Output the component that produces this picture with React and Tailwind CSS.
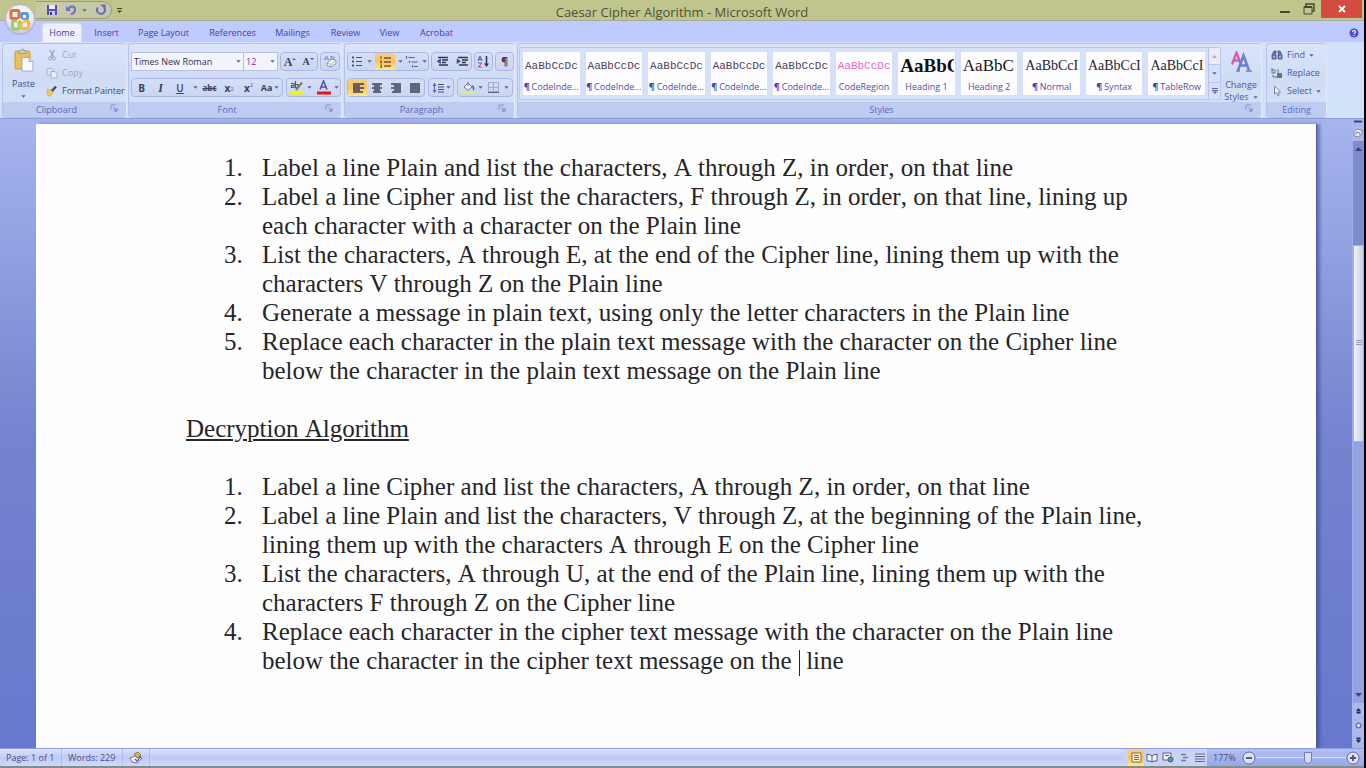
import React from "react";

const UI = "font-['Open_Sans','Noto_Sans',sans-serif]";

function Arrow({ className = "" }) {
  return (
    <svg width="5" height="3" viewBox="0 0 5 3" className={"shrink-0 " + className} aria-hidden="true">
      <path d="M0.3 0.2h4.400L2.500 2.800z" fill="#5a62ae" />
    </svg>
  );
}

function Launcher({ label }) {
  return (
    <button aria-label={label} className="absolute right-1 top-0 h-3 w-3">
      <svg width="9" height="9" viewBox="0 0 9 9" fill="none">
        <path d="M1 6V1h5" stroke="#8a94cc" />
        <path d="M3.500 3.500l3 3M7 4v3H4" stroke="#6f7ac0" />
      </svg>
    </button>
  );
}

function Group({ name, launcher, className = "", children }) {
  return (
    <section
      aria-label={name}
      className={"flex h-[75px] flex-col overflow-hidden rounded-sm border border-[#b6c2ea] border-r-[#e6e9fb] bg-linear-to-b from-[#dbe4fa] via-[#cfdcf4] to-[#d6e4f6] " + className}
    >
      <div className="min-h-0 flex-1">{children}</div>
      <div className={"relative h-[15px] shrink-0 bg-[#bfccf2] text-center text-[9px] leading-[15px] text-[#5868bd] " + (launcher ? "pr-4" : "")}>
        {name}
        {launcher && <Launcher label={name + " settings"} />}
      </div>
    </section>
  );
}

function Cluster({ className = "", children }) {
  return (
    <div className={"flex h-[19px] items-center rounded-sm border border-[#adb5e4] bg-linear-to-b from-[#d5def7] to-[#cad6f1] " + className}>
      {children}
    </div>
  );
}

function Btn({ label, active, className = "w-5", children }) {
  return (
    <button
      aria-label={label}
      className={
        "flex h-full shrink-0 items-center justify-center text-[#3d3f5c] " +
        (active ? "bg-linear-to-b from-[#f3cf90] via-[#fbc05a] to-[#fde88f] " : "") +
        className
      }
    >
      {children}
    </button>
  );
}

function Svg({ w = 14, h = 14, children }) {
  return (
    <svg width={w} height={h} viewBox={`0 0 ${w} ${h}`} fill="none" aria-hidden="true" className="shrink-0">
      {children}
    </svg>
  );
}

function AlignIcon({ d }) {
  return (
    <Svg w={12} h={10}>
      <path d={d} stroke="#3c3e58" strokeWidth="1.400" />
    </Svg>
  );
}

function OfficeOrb() {
  return (
    <button aria-label="Office Button" className="absolute left-1 top-1 z-10 h-8 w-8">
      <svg width="32" height="32" viewBox="0 0 32 32" fill="none">
        <defs>
          <radialGradient id="orb" cx="50%" cy="35%" r="65%">
            <stop offset="0" stopColor="#ffffff" />
            <stop offset="0.65" stopColor="#e9eaf6" />
            <stop offset="1" stopColor="#b5b9d8" />
          </radialGradient>
        </defs>
        <circle cx="16" cy="15.500" r="15" fill="url(#orb)" stroke="#a5a7b0" strokeWidth="0.800" />
        <rect x="7" y="6.500" width="8" height="8" rx="1.500" stroke="#e5703f" strokeWidth="3" />
        <rect x="17.500" y="9.500" width="6" height="6" rx="1" stroke="#5b97dd" strokeWidth="2.800" />
        <rect x="8.500" y="17" width="6.500" height="8" rx="1" stroke="#9ccb62" strokeWidth="2.800" />
        <rect x="17" y="17" width="7.600" height="7.400" rx="1.500" stroke="#f2bd42" strokeWidth="3" />
        <path d="M13 17.500l3-3 3 3" stroke="#fff" strokeWidth="1.200" />
      </svg>
    </button>
  );
}

function TitleBar() {
  return (
    <header className="relative flex h-[21px] shrink-0 items-start border-b border-[#a9ae92] bg-[#bfc58c]">
      <div className="ml-9 mt-px flex h-[18px] w-[76px] items-center rounded-r-full border border-l-0 border-[#989d79] bg-[#c5c9a4] pl-2.5">
        <button aria-label="Save" className="w-5">
          <Svg w={12} h={12}>
            <path d="M1 1h10v10H1z" fill="#5450b4" />
            <path d="M3 1h6v4H3z" fill="#e9eafa" />
            <path d="M3 7h6v4H3z" fill="#c8cbef" />
            <path d="M4 8h2v3H4z" fill="#3a3790" />
          </Svg>
        </button>
        <button aria-label="Undo" className="w-3">
          <Svg w={11} h={12}>
            <path d="M0 2v5h5z" fill="#6b70c9" />
            <path d="M2.500 5C4 1.500 9 1.500 9 5.500S6.500 9.500 5 10.500" stroke="#6b70c9" strokeWidth="2" />
          </Svg>
        </button>
        <Arrow className="ml-1" />
        <button aria-label="Repeat" className="ml-2">
          <Svg w={12} h={12}>
            <path d="M2.800 3.500C0.500 6.500 3 10 6 10s5-3 3.200-6.500" stroke="#6368c6" strokeWidth="2" />
            <path d="M5 0.500h5.500v5z" fill="#6368c6" />
          </Svg>
        </button>
      </div>
      <button aria-label="Customize toolbar" className="ml-1 mt-2">
        <Svg w={7} h={6}>
          <path d="M1 0.500h5" stroke="#44472f" />
          <path d="M1 2.500h5L3.500 5z" fill="#44472f" />
        </Svg>
      </button>
      <h1 className="absolute inset-x-0 top-0 text-center text-[13px] leading-6 text-[#4f5138]">
        Caesar Cipher Algorithm - Microsoft Word
      </h1>
      <div className="relative ml-auto flex h-[18px] items-start">
        <button aria-label="Minimize" className="flex h-[18px] w-6 items-center justify-center">
          <Svg w={10} h={10}><path d="M0 8h10" stroke="#47492f" strokeWidth="2" /></Svg>
        </button>
        <button aria-label="Restore" className="flex h-[18px] w-6 items-center justify-center">
          <Svg w={12} h={12}>
            <path d="M3 3V1h8v7H9" stroke="#47492f" strokeWidth="1.500" />
            <path d="M1 3.500h8V11H1z" stroke="#47492f" />
            <path d="M1 4h8" stroke="#47492f" strokeWidth="2" />
          </Svg>
        </button>
        <button aria-label="Close" className="flex h-[18px] w-[41px] items-center justify-center bg-[#d44b3f]">
          <Svg w={8} h={8}><path d="M1 1l6 6M7 1L1 7" stroke="#fff" strokeWidth="1.800" /></Svg>
        </button>
        <span className="w-0.5" />
      </div>
    </header>
  );
}

const tabs = [
  ["Insert", "w-[49px]"],
  ["Page Layout", "w-[65px]"],
  ["References", "w-[73px]"],
  ["Mailings", "w-[47px]"],
  ["Review", "w-[59px]"],
  ["View", "w-[29px]"],
  ["Acrobat", "w-[65px]"],
];

function TabRow() {
  return (
    <nav className="flex h-[21px] shrink-0 items-end bg-[#bfcaff] pl-[42px] pr-[5px] text-[9px] text-[#4045a4]">
      <button className="h-[19px] w-10 rounded-t-sm border border-b-0 border-[#d9dcfa] bg-[#eef0fd] leading-[18px]">Home</button>
      {tabs.map(([t, w]) => (
        <button key={t} className={"h-[19px] whitespace-nowrap leading-[18px] " + w}>{t}</button>
      ))}
      <button aria-label="Help" className="mb-1 ml-auto">
        <Svg w={10} h={10}>
          <circle cx="5" cy="5" r="4.500" fill="#4d4fd0" />
          <path d="M3.500 4c0-2 3-2 3 0 0 1-1.500 1-1.500 2M5 7v1" stroke="#fff" strokeWidth="1.100" />
        </Svg>
      </button>
    </nav>
  );
}

function Clipboard() {
  return (
    <Group name="Clipboard" launcher className="w-[125px]">
      <div className="flex h-full">
        <button className="flex w-[41px] flex-col items-center pt-1 text-[9px] leading-[14px] text-[#3e4795]">
          <Svg w={22} h={25}>
            <rect x="2" y="3" width="15" height="18" rx="1.500" fill="#e9bf58" stroke="#c79b3e" />
            <path d="M6 2.500h2a1.500 1.500 0 0 1 3 0h2v3H6z" fill="#c4c8d6" stroke="#8a8e9e" strokeWidth="0.700" />
            <path d="M9 9.500h7l4 4V23H9z" fill="#f8f9ff" stroke="#969cc0" strokeWidth="0.800" />
            <path d="M16 9.500v4h4" fill="#d4d9ed" stroke="#969cc0" strokeWidth="0.800" />
          </Svg>
          <span className="mt-1">Paste</span>
          <Arrow className="mt-1" />
        </button>
        <div className="flex flex-col pt-0.5 text-[9px] leading-[18px] text-[#3e4795]">
          <button className="flex h-[18px] items-center gap-1 pl-0.5 text-[#a6a4c3]">
            <Svg w={12} h={12}>
              <path d="M4 1l3.500 7M8.500 1L5 8" stroke="#9a9cc0" strokeWidth="1.300" />
              <circle cx="4" cy="9.500" r="1.500" stroke="#9a9cc0" />
              <circle cx="8" cy="9.500" r="1.500" stroke="#9a9cc0" />
            </Svg>
            Cut
          </button>
          <button className="flex h-[18px] items-center gap-1 pl-0.5 text-[#a6a4c3]">
            <Svg w={12} h={12}>
              <path d="M1 1.500h5l1 1V8H1z" fill="#dde3f4" stroke="#b0b5d2" />
              <path d="M5 4.500h4l2 2V11H5z" fill="#eaeefa" stroke="#a6abcc" />
            </Svg>
            Copy
          </button>
          <button className="flex h-[18px] items-center gap-1 whitespace-nowrap pl-0.5">
            <Svg w={12} h={12}>
              <path d="M1 5l5-1 1 3-3 4H2z" fill="#f0cd4e" stroke="#b99a35" strokeWidth="0.500" />
              <path d="M6 6l4-4.500" stroke="#45464f" strokeWidth="2.200" />
            </Svg>
            Format Painter
          </button>
        </div>
      </div>
    </Group>
  );
}

function FontGroup() {
  return (
    <Group name="Font" launcher className="ml-px w-[214px]">
      <div className="flex flex-col gap-[7px] pl-0.5 pt-2">
        <div className="flex">
          <label className="relative flex h-[19px] w-[113px] items-center border border-[#b7bfe6] bg-[#f3f4fd]">
            <select aria-label="Font name" className="w-full appearance-none bg-transparent pl-0.5 text-[9px] leading-4 text-[#31324b] outline-none">
              <option>Times New Roman</option>
            </select>
            <Arrow className="absolute right-0.5" />
          </label>
          <label className="relative flex h-[19px] w-[34px] items-center border border-l-0 border-[#b7bfe6] bg-[#f3f4fd]">
            <select aria-label="Font size" className="w-full appearance-none bg-transparent pl-0.5 text-[9px] leading-4 text-[#8b2fb0] outline-none">
              <option>12</option>
            </select>
            <Arrow className="absolute right-0.5" />
          </label>
          <Cluster className="ml-0.5 w-[38px]">
            <Btn label="Grow font" className="w-[18px]">
              <span className="font-['Liberation_Serif',serif] text-[12px] font-bold leading-4">A</span>
              <Svg w={4} h={10}><path d="M0 3l2-2 2 2z" fill="#5059b5" /></Svg>
            </Btn>
            <Btn label="Shrink font" className="w-[18px]">
              <span className="font-['Liberation_Serif',serif] text-[10px] font-bold leading-4">A</span>
              <Svg w={4} h={10}><path d="M0 1l2 2 2-2z" fill="#5059b5" /></Svg>
            </Btn>
          </Cluster>
          <Cluster className="ml-0.5 w-5">
            <Btn label="Clear formatting" className="w-[18px]">
              <Svg w={14} h={13}>
                <path d="M1 5l2.500-4L6 5M2 4h3M8 1v4h3V2H8" stroke="#8287b5" />
                <path d="M4 8l5-4 4 1.500v3L8 12 4 10.500z" fill="#f6f6fc" stroke="#82859f" strokeWidth="0.900" />
                <path d="M4 8l4 1.500 5-4M8 9.500V12" stroke="#9a9cb5" strokeWidth="0.700" />
              </Svg>
            </Btn>
          </Cluster>
        </div>
        <div className="flex gap-[3px] text-[10px] leading-4">
          <Cluster className="w-[152px]">
            <Btn label="Bold" className="w-[19px]"><b>B</b></Btn>
            <Btn label="Italic" className="w-[19px]"><i className="font-['Liberation_Serif',serif] text-[12px] font-bold">I</i></Btn>
            <Btn label="Underline" className="w-5"><span className="font-semibold underline">U</span></Btn>
            <Btn label="Underline style" className="w-2.5"><Arrow /></Btn>
            <Btn label="Strikethrough" className="w-[19px] text-[8px]"><b className="line-through">abc</b></Btn>
            <Btn label="Subscript" className="w-5"><b>x</b><sub className="text-[6px] text-[#5059b5]">2</sub></Btn>
            <Btn label="Superscript" className="w-[19px]"><b>x</b><sup className="text-[6px] text-[#5059b5]">2</sup></Btn>
            <Btn label="Change case" className="w-6 gap-0.5 text-[9px]"><b>Aa</b><Arrow /></Btn>
          </Cluster>
          <Cluster className="w-[55px]">
            <Btn label="Highlight" className="w-[27px] gap-[3px]">
              <Svg w={15} h={15}>
                <path d="M1 11.500h14v3H1z" fill="#f8f300" />
                <path d="M2 3.500h3v4H2.500V5.500H5M6.500 1v6.500H9v-3H6.500" stroke="#4f5268" strokeWidth="1.100" />
                <path d="M7 10l6-7.500" stroke="#7e8448" strokeWidth="2.200" />
              </Svg>
              <Arrow />
            </Btn>
            <Btn label="Font color" className="w-[26px] gap-[3px]">
              <Svg w={15} h={15}>
                <path d="M4 9.500L7.500 1l3.500 8.500M5 7h5" stroke="#4b52a6" strokeWidth="1.500" />
                <path d="M1 11.500h14v3H1z" fill="#f01020" />
              </Svg>
              <Arrow />
            </Btn>
          </Cluster>
        </div>
      </div>
    </Group>
  );
}

function IndentIcon({ arrow }) {
  return (
    <Svg w={12} h={11}>
      <path d="M2 1.500h10M6 4h6M6 6.500h4M3 9h9" stroke="#34364f" strokeWidth="1.500" />
      <path d={arrow} fill="#3c4690" stroke="#3c4690" strokeWidth="0.600" />
    </Svg>
  );
}

function Paragraph() {
  return (
    <Group name="Paragraph" launcher className="ml-0.5 w-[171px]">
      <div className="flex flex-col gap-[7px] pl-0.5 pt-2">
        <div className="flex gap-0.5">
          <Cluster className="w-[82px]">
            <Btn label="Bullets" className="w-[27px] gap-1">
              <Svg w={12} h={11}>
                <path d="M1 1.500h2M1 5.500h2M1 9.500h2" stroke="#4a4fa0" strokeWidth="1.800" />
                <path d="M5 1.500h6M5 5.500h6M5 9.500h6" stroke="#4d4f6c" />
              </Svg>
              <Arrow />
            </Btn>
            <Btn label="Numbering" active className="w-5">
              <Svg w={12} h={12}>
                <path d="M2 0v3M1 5h1.500v2H1M1 9h1.500v2.500H1" stroke="#735a24" />
                <path d="M5 2h7M5 6h7M5 10h7" stroke="#725a34" strokeWidth="1.300" />
              </Svg>
            </Btn>
            <Btn label="Numbering style" className="w-2.5"><Arrow /></Btn>
            <Btn label="Multilevel list" className="w-[22px] gap-1">
              <Svg w={13} h={12}>
                <path d="M1.500 0v3M4.500 4.500v2.500M7.500 9v2.500" stroke="#6166a8" strokeWidth="1.200" />
                <path d="M3.500 1.500h6M6.500 6h6M9 10.500h4" stroke="#5f627f" strokeWidth="1.200" />
              </Svg>
              <Arrow />
            </Btn>
          </Cluster>
          <Cluster className="w-[41px]">
            <Btn label="Decrease indent"><IndentIcon arrow="M4.500 3L1 5.300l3.500 2.200z" /></Btn>
            <Btn label="Increase indent"><IndentIcon arrow="M1 3l3.500 2.300L1 7.500z" /></Btn>
          </Cluster>
          <Cluster className="w-[19px]">
            <Btn label="Sort" className="w-[17px]">
              <Svg w={13} h={13}>
                <path d="M1 6l2-5 2 5M1.500 4.500h3" stroke="#494fbe" />
                <path d="M1 8h4l-4 4h4" stroke="#b24878" />
                <path d="M9.500 1v8" stroke="#34364f" strokeWidth="1.500" />
                <path d="M7 8.500h5L9.500 12z" fill="#34364f" />
              </Svg>
            </Btn>
          </Cluster>
          <Cluster className="w-[19px]">
            <Btn label="Show paragraph marks" className="w-[17px] text-[11px] font-bold">¶</Btn>
          </Cluster>
        </div>
        <div className="flex gap-[3px]">
          <Cluster className="w-[78px]">
            <Btn label="Align left" active className="w-[19px]"><AlignIcon d="M1 1h11M1 3h7M1 5h11M1 7h7M1 9h10" /></Btn>
            <Btn label="Center" className="w-[19px]"><AlignIcon d="M1 1h10M3 3h6M1 5h10M3 7h6M2 9h8" /></Btn>
            <Btn label="Align right" className="w-[19px]"><AlignIcon d="M1 1h10M4 3h7M1 5h10M4 7h7M2 9h9" /></Btn>
            <Btn label="Justify" className="w-[19px]"><AlignIcon d="M1 1h10M1 3h10M1 5h10M1 7h10M1 9h10" /></Btn>
          </Cluster>
          <Cluster className="w-[26px]">
            <Btn label="Line spacing" className="w-6 gap-0.5">
              <Svg w={12} h={12}>
                <path d="M2.500 1v10" stroke="#5863c8" />
                <path d="M0.500 4l2-3 2 3zM0.500 8l2 3 2-3z" fill="#5863c8" />
                <path d="M6 2.500h6M6 5h6M6 7.500h6M6 10h6" stroke="#4d4f6c" />
              </Svg>
              <Arrow />
            </Btn>
          </Cluster>
          <Cluster className="w-[56px]">
            <Btn label="Shading" className="w-[27px] gap-[3px]">
              <Svg w={14} h={13}>
                <path d="M1 10.500h12v2H1z" fill="#e8ee5c" />
                <path d="M3 6l4-4 4 4-4 3.500z" fill="#eef0fb" stroke="#73779e" />
                <path d="M7 5V1" stroke="#73779e" />
                <path d="M11 5c2 1 2 3 1 4" stroke="#4e5cc0" strokeWidth="1.600" />
              </Svg>
              <Arrow />
            </Btn>
            <Btn label="Borders" className="w-[27px] gap-[5px]">
              <Svg w={11} h={11}>
                <path d="M0.500 0.500h10v9H0.500zM5.500 1v9M1 5.500h9" stroke="#a3a8cd" />
                <path d="M0 10.500h11" stroke="#5d6080" />
              </Svg>
              <Arrow />
            </Btn>
          </Cluster>
        </div>
      </div>
    </Group>
  );
}

const mono = "font-['Liberation_Mono',monospace] text-[11px] ";
const serif = "font-['Liberation_Serif',serif] ";
const styles = [
  ["¶", "CodeInde...", mono + "text-[#4d3d5c]"],
  ["¶", "CodeInde...", mono + "text-[#4d3d5c]"],
  ["¶", "CodeInde...", mono + "text-[#4d3d5c]"],
  ["¶", "CodeInde...", mono + "text-[#4d3d5c]"],
  ["¶", "CodeInde...", mono + "text-[#4d3d5c]"],
  ["", "CodeRegion", mono + "text-[#f062c8]"],
  ["", "Heading 1", serif + "text-[19px] font-bold text-[#111]", "AaBbC"],
  ["", "Heading 2", serif + "text-[17px] text-[#161616]", "AaBbC"],
  ["¶", "Normal", serif + "text-[14px] text-[#28242c]", "AaBbCcI"],
  ["¶", "Syntax", serif + "text-[14px] text-[#28242c]", "AaBbCcI"],
  ["¶", "TableRow", serif + "text-[14px] text-[#28242c]", "AaBbCcI"],
];

function Styles() {
  return (
    <Group name="Styles" launcher className="ml-0.5 min-w-0 flex-1">
      <div className="flex pl-px pt-[3px]">
        <div className="flex h-[53px] min-w-0 flex-1 border border-[#bac7ef] bg-[#d6e0f8]">
          <div className="grid min-w-0 flex-1 grid-cols-11">
            {styles.map(([mark, name, cls, sample = "AaBbCcDc"], i) => (
              <button key={i} className="mx-[3px] mt-1 flex h-[43px] min-w-0 flex-col overflow-hidden bg-[#fdfdff] px-px">
                <span className={"h-[27px] w-full overflow-hidden pl-px text-left leading-[28px] " + cls}>{sample}</span>
                <span className="flex w-full justify-center gap-0.5 whitespace-nowrap text-[9px] leading-4 text-[#5a4aa4]">
                  {mark && <b className="text-[#3d44c4]">{mark}</b>}
                  {name}
                </span>
              </button>
            ))}
          </div>
          <div className="flex w-3 flex-col divide-y divide-[#b8c2ea] border-l border-[#b8c2ea]">
            <button aria-label="Scroll up" className="flex flex-1 items-center justify-center bg-[#e9ebf6]"><Svg w={5} h={3}><path d="M0 3h5L2.500 0z" fill="#a9aec6" /></Svg></button>
            <button aria-label="Scroll down" className="flex flex-1 items-center justify-center"><Arrow /></button>
            <button aria-label="More styles" className="flex flex-1 items-center justify-center"><Svg w={6} h={6}><path d="M0 0.500h6M0 2.500h6" stroke="#5a62ae" /><path d="M0.500 3.500h5L3 6z" fill="#5a62ae" /></Svg></button>
          </div>
        </div>
        <button className="flex w-[40px] flex-col items-center pt-1 text-[9px] leading-3 text-[#4d56a8]">
          <Svg w={22} h={22}>
            <path d="M2 13.500L6.500 1.500l4.500 12M4 9.500h5" stroke="#d957ae" strokeWidth="2.300" />
            <path d="M8 19.500L13.500 4.500l5.500 15M10 14.500h7" stroke="#6a7fd4" strokeWidth="2.500" />
            <path d="M6 20h4M16 20h6" stroke="#6a7fd4" strokeWidth="1.500" />
          </Svg>
          <span className="mt-1.5">Change</span>
          <span className="flex items-center gap-1">Styles <Arrow /></span>
        </button>
      </div>
    </Group>
  );
}

function Editing() {
  const row = "flex h-[18px] items-center gap-1";
  return (
    <Group name="Editing" className="ml-1 w-[61px]">
      <div className="flex flex-col pl-1 pt-0.5 text-[9px] leading-[18px] text-[#4d56a8]">
        <button className={row}>
          <Svg w={12} h={12}>
            <path d="M1 10V6l2-4h2v8zM7 10V2h2l2 4v4z" fill="#6e76a6" stroke="#434b85" strokeWidth="0.800" />
            <path d="M5 5h2M2 8h2M8 8h2" stroke="#e5eafa" />
          </Svg>
          Find <Arrow />
        </button>
        <button className={row}>
          <Svg w={12} h={12}>
            <path d="M1 1v5h3V3H1M7 6V2M2 8v2h4" stroke="#646c8c" />
            <path d="M6 6h5v5H6z" fill="#58816b" />
          </Svg>
          Replace
        </button>
        <button className={row}>
          <Svg w={12} h={12}>
            <path d="M3.500 1v8l2-1.500L7 11l1.500-1L7 7h2.500z" fill="#fafaff" stroke="#74799c" strokeWidth="0.900" />
          </Svg>
          Select <Arrow />
        </button>
      </div>
    </Group>
  );
}

function ScrollBar() {
  return (
    <div className="flex w-3 shrink-0 flex-col bg-[#a9b9f0]">
      <button aria-label="Split" className="flex h-[5px] items-center justify-center"><Svg w={8} h={3}><path d="M0 1.500h8" stroke="#3b4377" strokeWidth="2" /></Svg></button>
      <button aria-label="View ruler" className="flex h-[17px] items-center justify-center">
        <Svg w={10} h={10}>
          <path d="M1 3l3-2 5 1v5l-3 2-5-1z" fill="#e8e6f4" stroke="#77779c" strokeWidth="0.800" />
          <path d="M3 7V4l4 1v3" stroke="#8a89aa" />
        </Svg>
      </button>
      <div className="flex min-h-0 flex-1 flex-col border-l border-[#a0afe8] bg-[#7d8ccb]">
        <button aria-label="Scroll up" className="flex h-4 shrink-0 items-center justify-center"><Svg w={7} h={4}><path d="M0 4h7L3.500 0z" fill="#3c4184" /></Svg></button>
        <div className="grow-[89]" />
        <div className="flex grow-[192] items-center justify-center border border-[#a8acd6] bg-linear-to-r from-[#f4f4fd] to-[#c8ccec]">
          <Svg w={6} h={6}><path d="M0 0.500h6M0 2.500h6M0 4.500h6" stroke="#999cba" /></Svg>
        </div>
        <div className="grow-[249] bg-[#93a3e0]" />
        <button aria-label="Scroll down" className="flex h-4 shrink-0 items-center justify-center bg-[#93a3e0]"><Svg w={7} h={4}><path d="M0 0h7L3.500 4z" fill="#4c3a8c" /></Svg></button>
      </div>
      <div className="flex h-[45px] shrink-0 flex-col items-center justify-around py-px">
        <button aria-label="Previous page"><Svg w={5} h={6}><path d="M0 3l2.500-3L5 3zM0.500 3.500h4v2h-4z" fill="#28294f" /></Svg></button>
        <button aria-label="Browse object"><Svg w={7} h={7}><circle cx="3.500" cy="3.500" r="2.500" fill="#d7d3ee" stroke="#55427e" /></Svg></button>
        <button aria-label="Next page"><Svg w={5} h={6}><path d="M0 3l2.500 3L5 3zM0.500 0.500h4v2h-4z" fill="#28294f" /></Svg></button>
      </div>
    </div>
  );
}

function Item({ n, children }) {
  return (
    <li className="flex">
      <span className="w-[38px] shrink-0">{n}.</span>
      <span>{children}</span>
    </li>
  );
}

function Document() {
  return (
    <main className="flex min-h-0 flex-1 bg-linear-to-b from-[#a6b5ee] via-[#7484cf] via-50% to-[#6878cc]">
      <div className="flex min-w-0 flex-1 overflow-hidden pl-9 pr-[35px] pt-[5px]">
        <article className="flex-1 border-r border-[#4e5c9a] bg-[#fefeff] pl-[150px] pt-[29px] font-['Liberation_Serif','Times_New_Roman',serif] text-[25px] leading-[29px] text-[#25252a] shadow-[3px_0_3px_rgba(50,60,130,0.5)] [font-kerning:none]">
          <ol className="pl-[38px]">
            <Item n={1}>Label a line Plain and list the characters, A through Z, in order, on that line</Item>
            <Item n={2}>Label a line Cipher and list the characters, F through Z, in order, on that line, lining up<br />each character with a character on the Plain line</Item>
            <Item n={3}>List the characters, A through E, at the end of the Cipher line, lining them up with the<br />characters V through Z on the Plain line</Item>
            <Item n={4}>Generate a message in plain text, using only the letter characters in the Plain line</Item>
            <Item n={5}>Replace each character in the plain text message with the character on the Cipher line<br />below the character in the plain text message on the Plain line</Item>
          </ol>
          <h2 className="my-[29px] underline decoration-2 underline-offset-2">Decryption Algorithm</h2>
          <ol className="pl-[38px]">
            <Item n={1}>Label a line Cipher and list the characters, A through Z, in order, on that line</Item>
            <Item n={2}>Label a line Plain and list the characters, V through Z, at the beginning of the Plain line,<br />lining them up with the characters A through E on the Cipher line</Item>
            <Item n={3}>List the characters, A through U, at the end of the Plain line, lining them up with the<br />characters F through Z on the Cipher line</Item>
            <Item n={4}>
              Replace each character in the cipher text message with the character on the Plain line<br />
              below the character in the cipher text message on the&nbsp;<span className="-my-1 ml-px inline-block h-[26px] w-px bg-[#25252a] align-middle" /> line
            </Item>
          </ol>
        </article>
      </div>
      <ScrollBar />
    </main>
  );
}

function StatusBar() {
  const cell = "flex h-full items-center border-r border-[#b1bbe6]";
  return (
    <footer className="flex h-5 shrink-0 items-center border-b-2 border-t border-b-[#858b88] border-t-[#8f9ee0] bg-linear-to-b from-[#dce2fc] via-[#bfcbf6] to-[#d0d9fb] text-[9px] leading-4 text-[#4f4c86]">
      <span className={cell + " w-[62px] pl-1.5"}>Page: 1 of 1</span>
      <span className={cell + " w-[61px] pl-1.5"}>Words: 229</span>
      <button aria-label="Proofing" className={cell + " w-[27px] justify-center"}>
        <Svg w={15} h={14}>
          <path d="M1 7l5-2 7 2-5 5-5-1z" fill="#f3f2fa" stroke="#686789" strokeWidth="0.900" />
          <path d="M5 3l4-2 3 3-4 3z" fill="#dcb64e" stroke="#77663b" strokeWidth="0.800" />
          <path d="M6 8l2 2 4-5" stroke="#4754b1" strokeWidth="1.200" />
        </Svg>
      </button>
      <div className="ml-auto flex h-full items-center bg-linear-to-b from-[#b3c0f2] to-[#98a8e8]">
        <div className="flex h-full w-[83px] items-center bg-[#c9d3f6] pl-1">
          <Btn label="Print layout" active className="w-4"><Svg w={11} h={11}><path d="M1 1h9v9H1z" fill="#fff3cd" stroke="#826d3d" /><path d="M3 3.500h5M3 5.500h5M3 7.500h5" stroke="#826d3d" /></Svg></Btn>
          <Btn label="Full screen reading" className="w-4"><Svg w={12} h={11}><path d="M1 2l4 1 1 1 1-1 4-1v7H8L6 10 4 9H1zM6 4v6" fill="#f2f3fa" stroke="#5c5f81" /></Svg></Btn>
          <Btn label="Web layout" className="w-4"><Svg w={12} h={11}><path d="M1 1h8v7H1zM3 3.500h4" fill="#f2f3fa" stroke="#5c5f81" /><circle cx="8.500" cy="7.500" r="2.500" fill="#569b93" stroke="#49519a" /></Svg></Btn>
          <Btn label="Outline" className="w-4"><Svg w={11} h={11}><path d="M2 2.500h5M4 5.500h5M2 8.500h5" stroke="#777d9c" strokeWidth="1.500" /></Svg></Btn>
          <Btn label="Draft" className="w-4"><Svg w={11} h={11}><path d="M0 2h10M0 4.500h10M0 7h10M0 9.500h10" stroke="#696d8c" /></Svg></Btn>
        </div>
        <span className="w-[35px] pl-1.5 text-left">177%</span>
        <button aria-label="Zoom out"><Svg w={14} h={14}><circle cx="7" cy="7" r="6" fill="#dce0f4" stroke="#666b94" /><path d="M4 7h6" stroke="#4d5077" strokeWidth="1.800" /></Svg></button>
        <input
          type="range"
          aria-label="Zoom"
          min="0"
          max="100"
          defaultValue="59"
          className="h-4 w-[90px] appearance-none bg-[linear-gradient(#dde3fb,#dde3fb)] bg-[length:100%_1px] bg-center bg-no-repeat [&::-webkit-slider-thumb]:h-3 [&::-webkit-slider-thumb]:w-2 [&::-webkit-slider-thumb]:appearance-none [&::-webkit-slider-thumb]:rounded-b-full [&::-webkit-slider-thumb]:border [&::-webkit-slider-thumb]:border-[#777ca8] [&::-webkit-slider-thumb]:bg-[#d7dbf2]"
        />
        <button aria-label="Zoom in"><Svg w={14} h={14}><circle cx="7" cy="7" r="6" fill="#dce0f4" stroke="#666b94" /><path d="M4 7h6M7 4v6" stroke="#4d5077" strokeWidth="1.800" /></Svg></button>
        <span className="w-1" />
      </div>
    </footer>
  );
}

export default function App() {
  return (
    <div className={"relative flex h-screen flex-col overflow-hidden border-r-2 border-black bg-[#bfcaff] " + UI}>
      <OfficeOrb />
      <TitleBar />
      <TabRow />
      <div className="flex h-[77px] shrink-0 border-b border-[#8f9cd8] bg-linear-to-b from-[#d5dffa] to-[#cfe2f8] pl-0.5 pr-[37px] pt-px">
        <Clipboard />
        <FontGroup />
        <Paragraph />
        <Styles />
        <Editing />
      </div>
      <Document />
      <StatusBar />
    </div>
  );
}
